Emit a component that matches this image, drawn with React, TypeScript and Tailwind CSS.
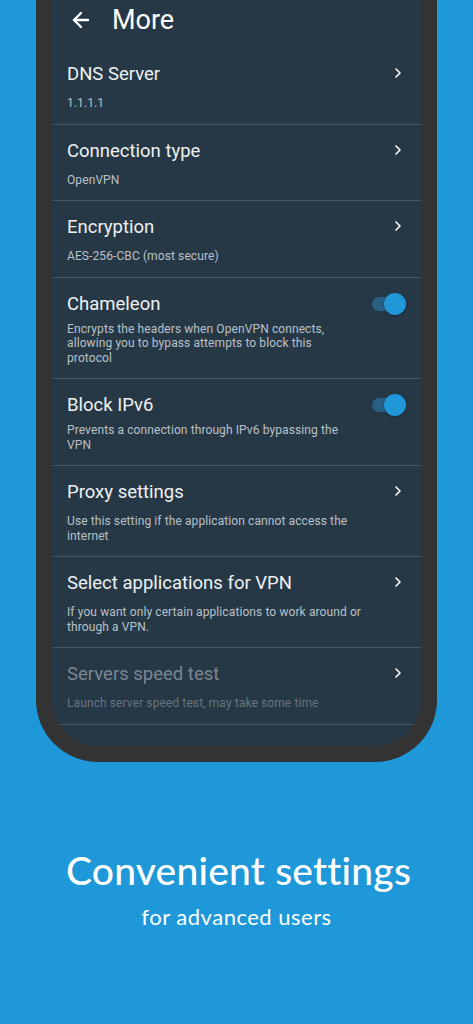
import { ArrowLeft, ChevronRight } from "lucide-react";

type Row = {
  title: string;
  desc: string[];
  kind: "chevron" | "toggle";
  disabled?: boolean;
};

const rows: Row[] = [
  { title: "DNS Server", desc: ["1.1.1.1"], kind: "chevron" },
  { title: "Connection type", desc: ["OpenVPN"], kind: "chevron" },
  { title: "Encryption", desc: ["AES-256-CBC (most secure)"], kind: "chevron" },
  {
    title: "Chameleon",
    desc: [
      "Encrypts the headers when OpenVPN connects,",
      "allowing you to bypass attempts to block this",
      "protocol",
    ],
    kind: "toggle",
  },
  {
    title: "Block IPv6",
    desc: ["Prevents a connection through IPv6 bypassing the", "VPN"],
    kind: "toggle",
  },
  {
    title: "Proxy settings",
    desc: ["Use this setting if the application cannot access the", "internet"],
    kind: "chevron",
  },
  {
    title: "Select applications for VPN",
    desc: ["If you want only certain applications to work around or", "through a VPN."],
    kind: "chevron",
  },
  {
    title: "Servers speed test",
    desc: ["Launch server speed test, may take some time"],
    kind: "chevron",
    disabled: true,
  },
];

function Toggle() {
  return (
    <div className="relative w-[34px] h-[22px] flex items-center">
      <div className="w-[30px] h-[14px] rounded-full bg-[#2a5f83]" />
      <div className="absolute right-0 top-0 w-[22px] h-[22px] rounded-full bg-[#1f97d8] shadow-[0_1px_2px_rgba(0,0,0,0.35)]" />
    </div>
  );
}

function SettingRow({ row }: { row: Row }) {
  const titleColor = row.disabled ? "text-[#7b8690]" : "text-[#eef1f3]";
  const descColor = row.disabled ? "text-[#68747e]" : "text-[#b9c1c8]";
  return (
    <div className="relative pl-[15px] pr-[20px] pt-[14px] pb-[13px] border-b border-[#46555f]">
      <div className={`text-[18.5px] leading-[24px] ${titleColor}`}>{row.title}</div>
      <div
        className={`text-[12px] leading-[14.5px] tracking-[0.1px] ${descColor} ${
          row.kind === "toggle" ? "mt-[6px]" : "mt-[10px]"
        }`}
      >
        {row.desc.map((d, i) => (
          <div key={i}>{d}</div>
        ))}
      </div>
      <div className="absolute right-[15px] top-[15px]">
        {row.kind === "chevron" ? (
          <ChevronRight className="w-[16px] h-[16px] text-white mt-[2px]" strokeWidth={2.4} />
        ) : (
          <Toggle />
        )}
      </div>
    </div>
  );
}

export default function App() {
  return (
    <div className="w-[473px] h-[1024px] bg-[#1e98d8] overflow-hidden">
      <div className="ml-[36px] w-[401px] h-[762px] bg-[#333333] rounded-b-[62px] px-[16px] pb-[16px]">
        <div
          className="h-full bg-[#263846] rounded-b-[46px] overflow-hidden"
          style={{ fontFamily: "Roboto, 'Noto Sans', sans-serif" }}
        >
          <div className="h-[48px] flex items-start pl-[17px]">
            <div className="h-[40px] flex items-center gap-[19px]">
              <ArrowLeft className="w-[24px] h-[24px] text-white" strokeWidth={2.4} />
              <span className="text-[27px] text-white">More</span>
            </div>
          </div>
          {rows.map((r) => (
            <SettingRow key={r.title} row={r} />
          ))}
        </div>
      </div>
      <div className="flex flex-col items-center text-white" style={{ fontFamily: "Lato, sans-serif" }}>
        <div className="mt-[84px] text-[39px] leading-[48px] font-medium tracking-[0.2px] pl-[4px]">
          Convenient settings
        </div>
        <div className="mt-[9px] text-[22px] leading-[28px] tracking-[0.5px]">for advanced users</div>
      </div>
    </div>
  );
}
